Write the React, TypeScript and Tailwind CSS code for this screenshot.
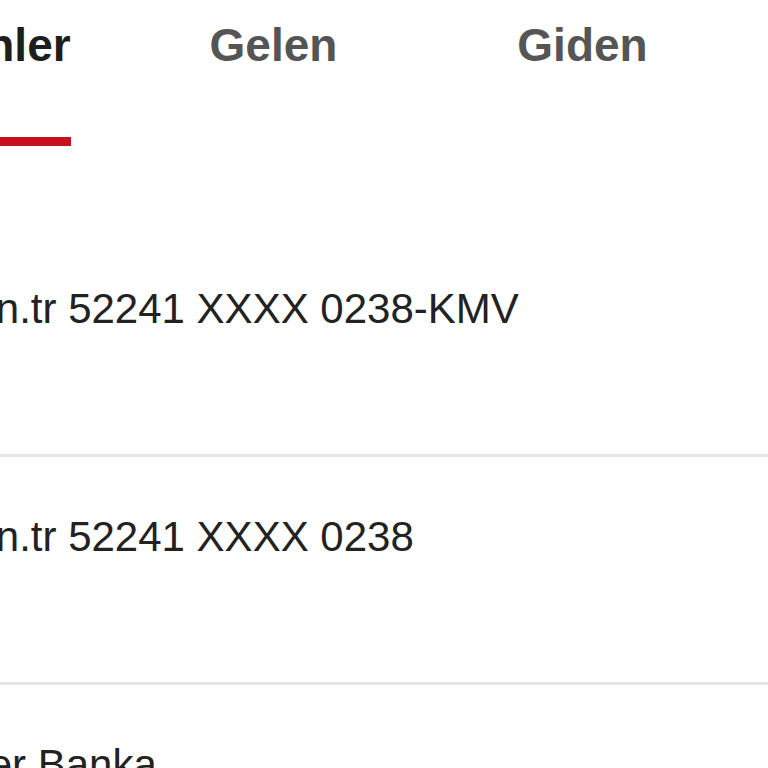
const rows = [
  { prefix: 'isbank.ge', text: 'n.tr 52241 XXXX 0238-KMV' },
  { prefix: 'isbank.ge', text: 'n.tr 52241 XXXX 0238' },
  { prefix: 'Türü: Diğ', text: 'er Banka' },
]

const tabs = [
  { label: 'Bekleyenler', active: true },
  { label: 'Gelen', active: false },
  { label: 'Giden', active: false },
]

export default function App() {
  return (
    <div className="h-[768px] w-[768px] overflow-hidden bg-white">
      <div className="ml-[-190px] w-[1100px]">
        <div className="flex h-[146px] w-[927px]">
          {tabs.map((tab) => (
            <div
              key={tab.label}
              className={
                tab.active
                  ? 'flex w-[309px] justify-center pr-[46px] pt-[22px]'
                  : 'flex w-[309px] justify-center pt-[22px]'
              }
            >
              <div className="flex flex-col items-stretch gap-[69px]">
                <span
                  className={
                    tab.active
                      ? "whitespace-nowrap font-['Liberation_Sans',Arial,sans-serif] text-[46px] font-bold leading-none text-[#1e1e1e]"
                      : "whitespace-nowrap font-['Liberation_Sans',Arial,sans-serif] text-[46px] font-bold leading-none text-[#555555]"
                  }
                >
                  {tab.label}
                </span>
                {tab.active && <div className="h-[10px] bg-[#c8101e]" />}
              </div>
            </div>
          ))}
        </div>
        <div className="h-[83px]" />
        <ul>
          {rows.map((row) => (
            <li key={row.text} className="h-[228px] border-b-[3px] border-[#e6e6e6] pl-[6px] pt-[59px]">
              <span className="whitespace-nowrap font-['Liberation_Sans',Arial,sans-serif] text-[42px] leading-none text-[#222222]">
                {row.prefix}
                {row.text}
              </span>
            </li>
          ))}
        </ul>
      </div>
    </div>
  )
}
